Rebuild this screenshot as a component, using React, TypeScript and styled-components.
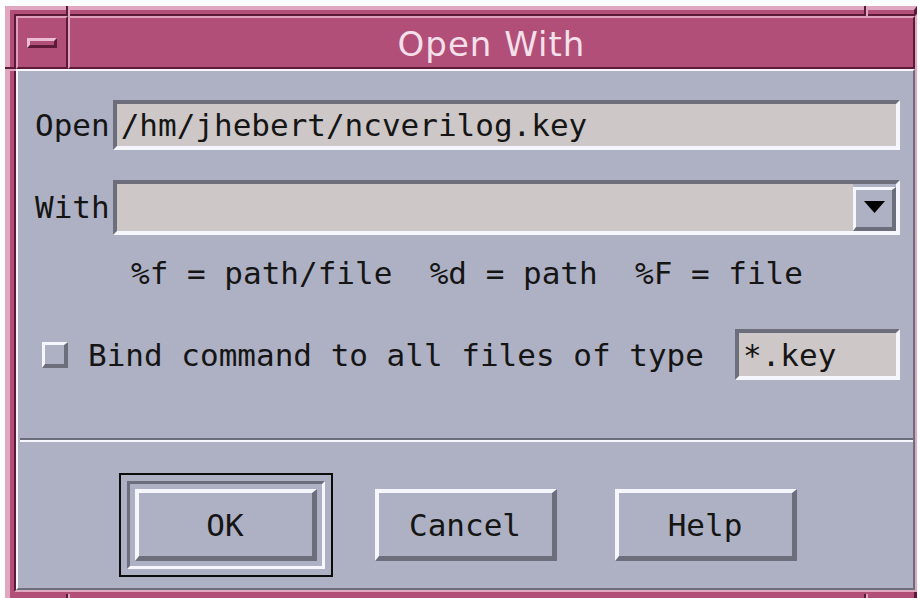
import React from "react";
import styled, { createGlobalStyle } from "styled-components";

const GlobalStyle = createGlobalStyle`
  html, body {
    margin: 0;
    padding: 0;
    background: #ffffff;
    overflow: hidden;
  }
  body {
    width: 918px;
    height: 598px;
  }
`;

const MONO = `"DejaVu Sans Mono", "Liberation Mono", monospace`;

const LIGHT = "#f6f6fe";
const SHADOW = "#6c6f7b";
const FACE = "#aeb1c3";
const ENTRY = "#cdc7c7";

// window manager frame
const WindowFrame = styled.div`
  position: relative;
  margin: 6px 0 0 5px;
  width: 912px;
  height: 600px;
  box-sizing: border-box;
  border-top: 4px solid #e0a7c1;
  border-left: 5px solid #e0a7c1;
  border-right: 3px solid #5d1a38;
  background: #b14f79;
  padding: 4px 0 0 4px;
`;

const Tick = styled.div<{ $vertical?: boolean }>`
  position: absolute;
  background: #5d1a38;
  box-shadow: ${(p) => (p.$vertical ? "2px 0 0 #e0a7c1" : "0 2px 0 #e0a7c1")};
  width: ${(p) => (p.$vertical ? "2px" : "11px")};
  height: ${(p) => (p.$vertical ? "10px" : "2px")};
`;

const Inner = styled.div`
  display: flex;
  flex-direction: column;
  width: 903px;
  box-sizing: border-box;
  border-top: 2px solid #5d1a38;
  border-left: 2px solid #5d1a38;
  border-right: 2px solid #e0a7c1;
  border-bottom: 2px solid #e0a7c1;
`;

const TitleBar = styled.div`
  display: flex;
  height: 53px;
`;

const MenuButton = styled.div`
  width: 52px;
  box-sizing: border-box;
  display: flex;
  align-items: center;
  justify-content: center;
  border-top: 2px solid #dfa0bc;
  border-left: 2px solid #dfa0bc;
  border-right: 2px solid #5d1a38;
  border-bottom: 2px solid #5d1a38;
`;

const MinimizeGlyph = styled.div`
  width: 30px;
  height: 10px;
  box-sizing: border-box;
  border-top: 3px solid #ecbcd2;
  border-left: 3px solid #ecbcd2;
  border-right: 3px solid #5d1a38;
  border-bottom: 3px solid #5d1a38;
`;

const TitleArea = styled.div`
  flex: 1;
  box-sizing: border-box;
  display: flex;
  align-items: center;
  justify-content: center;
  border-top: 2px solid #dfa0bc;
  border-left: 2px solid #dfa0bc;
  border-right: 2px solid #5d1a38;
  border-bottom: 2px solid #5d1a38;
  color: #f4e0ea;
  font-family: "DejaVu Sans", "Liberation Sans", sans-serif;
  font-size: 34px;
  letter-spacing: 1px;
  padding-top: 2px;
`;

const Client = styled.div`
  display: flex;
  flex-direction: column;
  height: 521px;
  box-sizing: border-box;
  background: ${FACE};
  border-top: 2px solid ${LIGHT};
  border-left: 2px solid ${LIGHT};
  border-right: 2px solid ${SHADOW};
  border-bottom: 2px solid ${SHADOW};
  font-family: ${MONO};
  font-size: 31px;
  color: #151515;
`;

const Form = styled.div`
  display: flex;
  flex-direction: column;
  padding: 29px 13px 0 17px;
`;

const FieldRow = styled.div<{ $height: number; $top?: number }>`
  display: flex;
  align-items: center;
  gap: 3px;
  height: ${(p) => p.$height}px;
  margin-top: ${(p) => p.$top ?? 0}px;
`;

const Label = styled.span`
  line-height: 1;
`;

const TextField = styled.div<{ $width?: number }>`
  flex: ${(p) => (p.$width ? "none" : "1")};
  width: ${(p) => (p.$width ? `${p.$width}px` : "auto")};
  height: 100%;
  box-sizing: border-box;
  display: flex;
  align-items: center;
  padding: 0 4px;
  background: ${ENTRY};
  border-top: 4px solid ${SHADOW};
  border-left: 4px solid ${SHADOW};
  border-right: 4px solid ${LIGHT};
  border-bottom: 4px solid ${LIGHT};
  white-space: pre;
`;

const Combo = styled.div`
  flex: 1;
  height: 100%;
  box-sizing: border-box;
  display: flex;
  border-top: 4px solid ${SHADOW};
  border-left: 4px solid ${SHADOW};
  border-right: 4px solid ${LIGHT};
  border-bottom: 4px solid ${LIGHT};
  background: ${FACE};
`;

const ComboText = styled.div`
  flex: 1;
  background: ${ENTRY};
`;

const ArrowButton = styled.div`
  width: 43px;
  margin-top: 3px;
  box-sizing: border-box;
  display: flex;
  align-items: center;
  justify-content: center;
  background: ${FACE};
  border-top: 3px solid ${LIGHT};
  border-left: 3px solid ${LIGHT};
  border-right: 4px solid ${SHADOW};
  border-bottom: 4px solid ${SHADOW};
  padding-bottom: 3px;
`;

const Hint = styled.div`
  margin-top: 19px;
  height: 38px;
  display: flex;
  align-items: center;
  justify-content: center;
  white-space: pre;
  padding-right: 1px;
`;

const CheckRow = styled.div`
  display: flex;
  align-items: center;
  height: 51px;
  margin-top: 37px;
  padding-left: 7px;
`;

const CheckBox = styled.div`
  width: 26px;
  height: 26px;
  box-sizing: border-box;
  margin-right: 20px;
  background: ${FACE};
  border-top: 3px solid ${LIGHT};
  border-left: 3px solid ${LIGHT};
  border-right: 4px solid ${SHADOW};
  border-bottom: 4px solid ${SHADOW};
`;

const CheckLabel = styled.span`
  flex: 1;
  white-space: pre;
`;

const Separator = styled.div`
  margin: 58px 0 0 2px;
  height: 2px;
  background: ${SHADOW};
  border-bottom: 2px solid ${LIGHT};
`;

const ButtonRow = styled.div`
  display: flex;
  justify-content: center;
  margin-top: 31px;
  height: 104px;
`;

const ButtonCell = styled.div`
  width: 240px;
  display: flex;
  align-items: center;
  justify-content: center;
`;

const DefaultRing = styled.div`
  border: 2px solid #0c0c0c;
  padding: 6px;
`;

const DefaultWell = styled.div`
  border-top: 3px solid ${SHADOW};
  border-left: 3px solid ${SHADOW};
  border-right: 3px solid ${LIGHT};
  border-bottom: 3px solid ${LIGHT};
  padding: 5px;
`;

const PushButton = styled.div`
  width: 182px;
  height: 72px;
  box-sizing: border-box;
  display: flex;
  align-items: center;
  justify-content: center;
  background: ${FACE};
  border-top: 4px solid ${LIGHT};
  border-left: 4px solid ${LIGHT};
  border-right: 5px solid ${SHADOW};
  border-bottom: 5px solid ${SHADOW};
`;

const ticks = [
  { left: 56, top: -4, vertical: true },
  { left: 854, top: -4, vertical: true },
  { left: 56, top: 584, vertical: true },
  { left: 854, top: 584, vertical: true },
  { left: -5, top: 57, vertical: false },
];

export default function App() {
  return (
    <>
      <GlobalStyle />
      <WindowFrame>
        {ticks.map((t, i) => (
          <Tick key={i} $vertical={t.vertical} style={{ left: t.left, top: t.top }} />
        ))}
        <Inner>
          <TitleBar>
            <MenuButton>
              <MinimizeGlyph />
            </MenuButton>
            <TitleArea>Open With</TitleArea>
          </TitleBar>
          <Client>
            <Form>
              <FieldRow $height={50}>
                <Label>Open</Label>
                <TextField>/hm/jhebert/ncverilog.key</TextField>
              </FieldRow>
              <FieldRow $height={55} $top={30}>
                <Label>With</Label>
                <Combo>
                  <ComboText />
                  <ArrowButton>
                    <svg width="21" height="12" viewBox="0 0 21 12">
                      <polygon points="0,0 21,0 10.5,12" fill="#000" />
                    </svg>
                  </ArrowButton>
                </Combo>
              </FieldRow>
              <Hint>%f = path/file  %d = path  %F = file</Hint>
              <CheckRow>
                <CheckBox />
                <CheckLabel>Bind command to all files of type</CheckLabel>
                <TextField $width={165}>*.key</TextField>
              </CheckRow>
            </Form>
            <Separator />
            <ButtonRow>
              <ButtonCell>
                <DefaultRing>
                  <DefaultWell>
                    <PushButton>OK</PushButton>
                  </DefaultWell>
                </DefaultRing>
              </ButtonCell>
              <ButtonCell>
                <PushButton>Cancel</PushButton>
              </ButtonCell>
              <ButtonCell>
                <PushButton>Help</PushButton>
              </ButtonCell>
            </ButtonRow>
          </Client>
        </Inner>
      </WindowFrame>
    </>
  );
}
